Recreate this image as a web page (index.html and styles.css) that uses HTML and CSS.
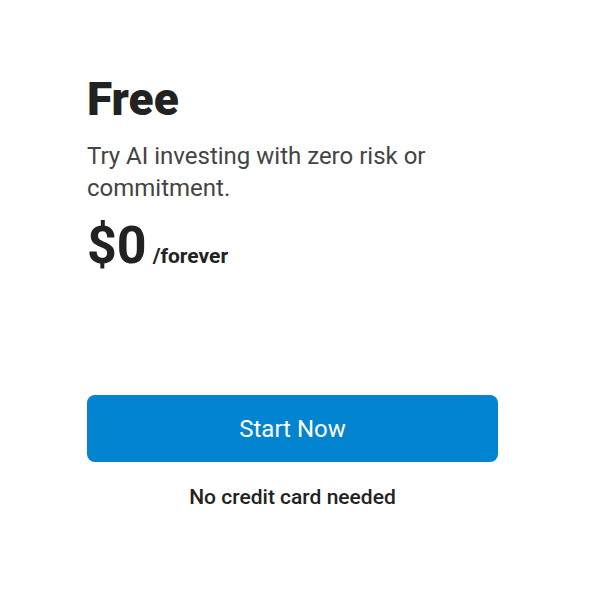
FILE: index.html
```html
<!DOCTYPE html>
<html lang="en">
<head>
    <meta charset="UTF-8">
    <meta name="viewport" content="width=device-width, initial-scale=1.0">
    <title>Free Plan</title>
    <link rel="stylesheet" href="styles.css">
</head>
<body>
    <div class="plan">
        <h1 class="plan-name">Free</h1>
        <p class="plan-desc">Try AI investing with zero risk or commitment.</p>
        <div class="price">
            <span class="amount">$0</span>
            <span class="period">/forever</span>
        </div>
        <button class="start-btn">Start Now</button>
        <p class="note">No credit card needed</p>
    </div>
</body>
</html>
```

FILE: styles.css
```css
* {
    box-sizing: border-box;
    margin: 0;
    padding: 0;
}

body {
    font-family: Roboto, 'Liberation Sans', Arial, sans-serif;
    background: #fff;
    color: #222;
}

.plan {
    width: 411px;
    margin-left: 87px;
    padding-top: 75px;
}

.plan-name {
    font-size: 46px;
    font-weight: 900;
    line-height: 48px;
    color: #222;
}

.plan-desc {
    margin-top: 17px;
    font-size: 24px;
    line-height: 32px;
    color: #444;
}

.price {
    display: flex;
    align-items: baseline;
    gap: 6px;
    margin-top: 12px;
}

.amount {
    font-size: 52px;
    font-weight: 700;
    line-height: 60px;
    color: #222;
}

.period {
    font-size: 21px;
    font-weight: 700;
    color: #222;
}

.start-btn {
    display: block;
    width: 100%;
    height: 67px;
    margin-top: 119px;
    border: none;
    border-radius: 8px;
    background: #0284d0;
    color: #fff;
    font-family: inherit;
    font-size: 24px;
    cursor: pointer;
}

.note {
    margin-top: 23px;
    text-align: center;
    font-size: 21px;
    font-weight: 500;
    line-height: 24px;
    color: #222;
}
```
